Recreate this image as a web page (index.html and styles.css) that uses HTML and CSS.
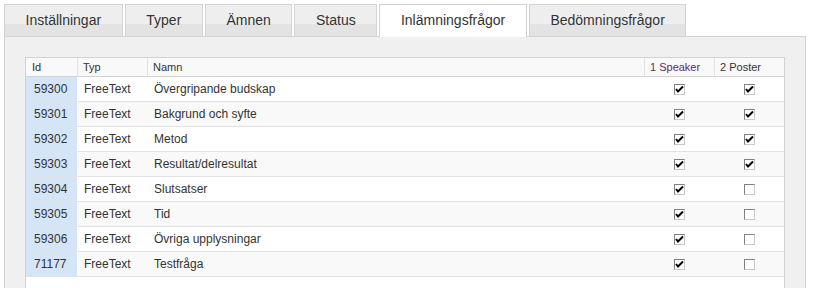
FILE: index.html
```html
<!DOCTYPE html>
<html lang="sv">
<head>
    <meta charset="UTF-8">
    <title>Inlämningsfrågor</title>
    <link rel="stylesheet" href="styles.css">
</head>
<body>
    <div class="page">
        <ul class="tab-nav">
            <li class="tab">Inställningar</li>
            <li class="tab">Typer</li>
            <li class="tab">Ämnen</li>
            <li class="tab">Status</li>
            <li class="tab active">Inlämningsfrågor</li>
            <li class="tab">Bedömningsfrågor</li>
        </ul>
        <div class="tab-panel">
            <div class="grid">
                <table class="questions">
                    <colgroup>
                        <col class="col-id">
                        <col class="col-type">
                        <col>
                        <col class="col-check">
                        <col class="col-check">
                    </colgroup>
                    <thead>
                        <tr>
                            <th class="id">Id</th>
                            <th>Typ</th>
                            <th>Namn</th>
                            <th class="visited">1 Speaker</th>
                            <th>2 Poster</th>
                        </tr>
                    </thead>
                    <tbody id="rows"></tbody>
                </table>
            </div>
        </div>
    </div>

    <script>
        const questions = [
            { id: 59300, name: 'Övergripande budskap', speaker: true, poster: true },
            { id: 59301, name: 'Bakgrund och syfte', speaker: true, poster: true },
            { id: 59302, name: 'Metod', speaker: true, poster: true },
            { id: 59303, name: 'Resultat/delresultat', speaker: true, poster: true },
            { id: 59304, name: 'Slutsatser', speaker: true, poster: false },
            { id: 59305, name: 'Tid', speaker: true, poster: false },
            { id: 59306, name: 'Övriga upplysningar', speaker: true, poster: false },
            { id: 71177, name: 'Testfråga', speaker: true, poster: false }
        ];

        const tick = '<svg width="9" height="9" viewBox="0 0 9 9"><path d="M1 4 L3 6.5 L8 1.5" fill="none" stroke="#000" stroke-width="2"/></svg>';

        function box(checked) {
            return '<span class="box">' + (checked ? tick : '') + '</span>';
        }

        const body = document.getElementById('rows');
        questions.forEach(function (q) {
            const tr = document.createElement('tr');
            tr.innerHTML =
                '<td class="id">' + q.id + '</td>' +
                '<td>FreeText</td>' +
                '<td>' + q.name + '</td>' +
                '<td class="check">' + box(q.speaker) + '</td>' +
                '<td class="check">' + box(q.poster) + '</td>';
            body.appendChild(tr);
        });
    </script>
</body>
</html>
```

FILE: styles.css
```css
body {
    margin: 0;
    background: #fff;
    font-family: Arial, "Liberation Sans", sans-serif;
    color: #333;
}
.page {
    padding: 4px 9px 0 4px;
}
.tab-nav {
    display: flex;
    gap: 2px;
    margin: 0;
    padding: 0;
    list-style: none;
}
.tab {
    height: 31px;
    line-height: 31px;
    padding: 0 20.6px;
    border: 1px solid #d3d3d3;
    border-bottom: none;
    background: linear-gradient(#eeeeee 0, #eeeeee 60%, #e3e3e3 60%, #e3e3e3 100%);
    font-size: 14px;
    color: #333;
}
.tab.active {
    position: relative;
    z-index: 1;
    height: 32px;
    margin-bottom: -1px;
    background: #fff;
}
.tab-panel {
    border: 1px solid #d3d3d3;
    background: #f0f0f0;
    padding: 20px 20px 0;
    height: 300px;
}
.grid {
    border: 1px solid #d3d3d3;
    background: #fff;
    height: 280px;
}
.questions {
    width: 100%;
    table-layout: fixed;
    border-collapse: separate;
    border-spacing: 0;
}
.col-id {
    width: 51px;
}
.col-type {
    width: 70px;
}
.col-check {
    width: 70px;
}
.questions th {
    height: 18px;
    padding: 0 5px;
    background: #f9f9f9;
    border-bottom: 1px solid #d3d3d3;
    border-left: 1px solid #e2e2e2;
    font-size: 11px;
    font-weight: normal;
    text-align: left;
    color: #333;
}
.questions th.id {
    border-left: none;
    padding-left: 6px;
}
.questions th.visited {
    color: #5b2a6e;
}
.questions td {
    height: 24px;
    padding: 0 7px;
    border-bottom: 1px solid #e3e3e3;
    font-size: 12px;
    white-space: nowrap;
}
.questions tbody tr:nth-child(even) td {
    background: #f9f9f9;
}
.questions td.id,
.questions tbody tr:nth-child(even) td.id {
    background: #d5e5f8;
    padding-left: 8px;
}
.questions td.check {
    padding: 0;
    text-align: center;
}
.box {
    display: inline-block;
    box-sizing: border-box;
    width: 11px;
    height: 11px;
    border: 1px solid #c8c8c8;
    border-top-color: #808080;
    border-left-color: #808080;
    background: #fff;
    vertical-align: middle;
    line-height: 0;
}
.box svg {
    display: block;
}
```
